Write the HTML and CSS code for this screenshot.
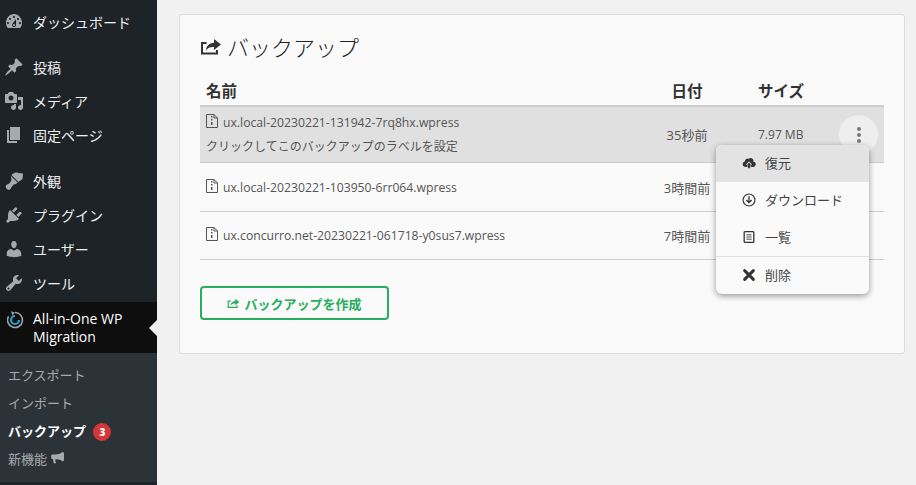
FILE: index.html
```html
<!DOCTYPE html>
<html lang="ja">
<head>
<meta charset="utf-8">
<title>バックアップ</title>
<link rel="stylesheet" href="styles.css">
</head>
<body>
<div class="shell">
  <aside class="sidebar">
    <nav class="menu">
      <a class="item first"><svg class="mi" viewBox="0 0 20 20"><path fill-rule="evenodd" d="M3.76 16h12.48c1.1-1.43 1.76-3.21 1.76-5.14 0-4.66-3.58-8.86-8-8.86s-8 4.2-8 8.86c0 1.93.66 3.71 1.76 5.14zM10 4c.55 0 1 .45 1 1s-.45 1-1 1-1-.45-1-1 .45-1 1-1zM6 6c.55 0 1 .45 1 1s-.45 1-1 1-1-.45-1-1 .45-1 1-1zm8 0c.55 0 1 .45 1 1s-.45 1-1 1-1-.45-1-1 .45-1 1-1zm-5.37 5.55L12 7v6c0 1.1-.9 2-2 2s-2-.9-2-2c0-.57.25-1.07.63-1.45zM4 10c.55 0 1 .45 1 1s-.45 1-1 1-1-.45-1-1 .45-1 1-1zm12 0c.55 0 1 .45 1 1s-.45 1-1 1-1-.45-1-1 .45-1 1-1zm-5 3c0-.55-.45-1-1-1s-1 .45-1 1 .45 1 1 1 1-.45 1-1z"/></svg><span>ダッシュボード</span></a>
      <a class="item gap"><svg class="mi" viewBox="0 0 20 20"><path d="M10.44 3.02l1.82-1.82 6.36 6.35-1.83 1.82c-1.05-.68-2.48-.57-3.41.36l-.75.75c-.92.93-1.04 2.35-.35 3.41l-1.83 1.82-2.41-2.41-2.8 2.79c-.42.42-3.38 2.71-3.8 2.29s1.86-3.39 2.28-3.81l2.79-2.79L4.1 9.36l1.83-1.82c1.05.69 2.48.57 3.4-.36l.75-.75c.93-.92 1.05-2.35.36-3.41z"/></svg><span>投稿</span></a>
      <a class="item"><svg class="mi" viewBox="0 0 20 20"><path fill-rule="evenodd" d="M13 11V4c0-.55-.45-1-1-1h-1.67L9 1H5L3.67 3H2c-.55 0-1 .45-1 1v7c0 .55.45 1 1 1h10c.55 0 1-.45 1-1zM7 4.5c1.38 0 2.5 1.12 2.5 2.5S8.38 9.5 7 9.5 4.5 8.38 4.5 7 5.62 4.5 7 4.5zM14 6h5v10.5c0 1.38-1.12 2.5-2.5 2.5S14 17.88 14 16.5s1.12-2.5 2.5-2.5c.17 0 .34.02.5.05V9h-3V6zm-4 8.05V13h2v3.5c0 1.38-1.12 2.5-2.5 2.5S7 17.88 7 16.5 8.12 14 9.5 14c.17 0 .34.02.5.05z"/></svg><span>メディア</span></a>
      <a class="item"><svg class="mi" viewBox="0 0 20 20"><path d="M6 15V2h10v13H6zm-1 1h8v2H3V5h2v11z"/></svg><span>固定ページ</span></a>
      <a class="item gap wide"><svg class="mi" viewBox="0 0 20 20"><path d="M14.48 11.06L7.41 3.97c.36-.33.7-.64 1.01-.92C10.34 1.33 13.12 1 15 2l4 .5-.5 5.5zM6.7 4.7l7.1 7.1-2 1.1c-1 .5-2 .3-2.5 1L7.5 16c-.3.5-.2 1.2-.6 1.6l-.9.9c-.8.8-2.5 0-3.3-.8s-1.5-2.4-.7-3.2l1-1c.4-.4 1.1-.3 1.6-.6l1.9-1.8c.7-.5.5-1.5 1-2.5L6.7 4.7z"/></svg><span>外観</span></a>
      <a class="item"><svg class="mi" viewBox="0 0 20 20"><path d="M13.11 4.36L9.87 7.6 8 5.73l3.24-3.24c.35-.34 1.05-.2 1.56.32.52.51.66 1.21.31 1.55zm-8 1.77l.91-1.12 9.01 9.01-1.19.84c-.71.71-2.63 1.16-3.82 1.16H6.14L4.9 17.26c-.59.59-1.54.59-2.12 0-.59-.58-.59-1.53 0-2.12l1.24-1.24v-3.88c0-1.13.4-3.13 1.09-3.89zm7.26 3.97l3.24-3.24c.34-.35 1.04-.21 1.55.31.52.51.66 1.21.31 1.55l-3.24 3.25z"/></svg><span>プラグイン</span></a>
      <a class="item"><svg class="mi" viewBox="0 0 20 20"><path d="M10 9.25c-2.27 0-2.73-3.44-2.73-3.44C7 4.02 7.82 2 9.97 2c2.16 0 2.98 2.02 2.71 3.81 0 0-.41 3.44-2.68 3.44zm0 2.57L12.72 10c2.39 0 4.52 2.33 4.52 4.53v2.49s-3.65 1.13-7.24 1.13c-3.65 0-7.24-1.13-7.24-1.13v-2.49c0-2.25 1.94-4.48 4.47-4.48z"/></svg><span>ユーザー</span></a>
      <a class="item"><svg class="mi" viewBox="0 0 20 20"><path fill-rule="evenodd" d="M16.68 9.77c-1.34 1.34-3.3 1.67-4.95.99l-5.41 6.52c-.99.99-2.59.99-3.58 0s-.99-2.59 0-3.57l6.52-5.42c-.68-1.65-.35-3.61.99-4.95 1.28-1.28 3.12-1.62 4.72-1.06l-2.89 2.89 2.82 2.82 2.86-2.87c.53 1.58.18 3.4-1.08 4.65zM3.81 16.21c.4.39 1.04.39 1.43 0 .4-.4.4-1.04 0-1.43-.39-.4-1.03-.4-1.43 0-.39.39-.39 1.03 0 1.43z"/></svg><span>ツール</span></a>
      <a class="item current">
        <svg class="logo" viewBox="0 0 20 20"><path d="M10 2.5a7.5 7.5 0 1 1-6.5 3.8" fill="none" stroke="#a0a5aa" stroke-width="1.6"/><path d="M6 1.2l3.8 1.3-2.3 3z" fill="#a0a5aa"/><path d="M14 10a4 4 0 1 1-4-4" fill="none" stroke="#1fa5d8" stroke-width="2.2"/></svg>
        <span>All-in-One WP Migration</span>
      </a>
    </nav>
    <ul class="submenu">
      <li>エクスポート</li>
      <li>インポート</li>
      <li class="on">バックアップ <b class="count">3</b></li>
      <li>新機能 <svg class="horn" viewBox="0 0 16 14"><path d="M15 1v9l-2 1c-.2-.5-.6-.8-1-1-2-1.3-5-1.6-7-1.6v2.8c.3.8.6 1.3 1 1.8H3L2 8.3H1.5C.5 8.300 0 7.300 0 5.500s.5-2.700 1.500-2.700H5C7.500 2.800 10 2.500 12 1c.5-.3.8-.6 1-1z"/></svg></li>
    </ul>
  </aside>
  <main class="content">
    <section class="card">
      <h1 class="title"><svg class="title-ic" viewBox="0 0 22 18"><path d="M14 1l7 5.500-7 5.500V9c-4 0-6.500.6-8 4 0-5 3-8 8-8.300V1z"/><path d="M17 12v3.500H2V5h4.500" fill="none" stroke="currentColor" stroke-width="2"/></svg>バックアップ</h1>
      <div class="table">
        <div class="row head"><div class="name">名前</div><div class="date">日付</div><div class="size">サイズ</div><div></div></div>
        <div class="row sel">
          <div class="name"><div class="file"><svg class="zip" viewBox="0 0 12 14"><path d="M.5.5h7.500l3.500 3.500v9.500H.5z" fill="none" stroke="currentColor"/><path d="M8 .5v3.500h3.500" fill="none" stroke="currentColor"/><path d="M5 2h1.500v1.500H5zM5 5h1.500v1.500H5zM5 8h1.500v3H5z"/></svg>ux.local-20230221-131942-7rq8hx.wpress</div><div class="label">クリックしてこのバックアップのラベルを設定</div></div>
          <div class="date">35秒前</div>
          <div class="size">7.97 MB</div>
          <div class="act"><span class="dots"><i></i><i></i><i></i></span></div>
        </div>
        <div class="row">
          <div class="name"><div class="file"><svg class="zip" viewBox="0 0 12 14"><path d="M.5.5h7.500l3.500 3.500v9.500H.5z" fill="none" stroke="currentColor"/><path d="M8 .5v3.500h3.500" fill="none" stroke="currentColor"/><path d="M5 2h1.500v1.500H5zM5 5h1.500v1.500H5zM5 8h1.500v3H5z"/></svg>ux.local-20230221-103950-6rr064.wpress</div></div>
          <div class="date">3時間前</div><div class="size"></div><div class="act"></div>
        </div>
        <div class="row last">
          <div class="name"><div class="file"><svg class="zip" viewBox="0 0 12 14"><path d="M.5.5h7.500l3.500 3.500v9.500H.5z" fill="none" stroke="currentColor"/><path d="M8 .5v3.500h3.500" fill="none" stroke="currentColor"/><path d="M5 2h1.500v1.500H5zM5 5h1.500v1.500H5zM5 8h1.500v3H5z"/></svg>ux.concurro.net-20230221-061718-y0sus7.wpress</div></div>
          <div class="date">7時間前</div><div class="size"></div><div class="act"></div>
        </div>
        <div class="popup">
          <div class="pi hover"><svg class="pic" viewBox="0 0 16 14"><path d="M12.900 5.500A3 3 0 0 0 8 2.200 3.500 3.500 0 0 0 3.200 5.200 3.200 3.200 0 0 0 3.500 11.500h2.700V9H4.300L8 5l3.700 4H9.800v2.500h2.700a3 3 0 0 0 .4-6z"/><path d="M6.900 9H5.700L8 6.500 10.300 9H9.100v4H6.900z"/></svg>復元</div>
          <div class="pi"><svg class="pic" viewBox="0 0 16 16"><circle cx="8" cy="8" r="6.800" fill="none" stroke="currentColor" stroke-width="1.300"/><path d="M8 3.800v7M5 8l3 3 3-3" fill="none" stroke="currentColor" stroke-width="1.500"/></svg>ダウンロード</div>
          <div class="pi"><svg class="pic" viewBox="0 0 16 16"><rect x="2.500" y="1.800" width="11" height="12.400" rx="1" fill="none" stroke="currentColor" stroke-width="1.500"/><path d="M5 5.500h6M5 8h6M5 10.500h6" stroke="currentColor" stroke-width="1"/></svg>一覧</div>
          <div class="pi del"><svg class="pic" viewBox="0 0 16 16"><path d="M3 3l10 10M13 3L3 13" stroke="currentColor" stroke-width="3.400" stroke-linecap="round"/></svg>削除</div>
        </div>
      </div>
      <a class="create"><svg class="btn-ic" viewBox="0 0 22 18"><path d="M14 1l7 5.500-7 5.500V9c-4 0-6.500.6-8 4 0-5 3-8 8-8.300V1z"/><path d="M17 12v3.500H2V5h4.500" fill="none" stroke="currentColor" stroke-width="2"/></svg>バックアップを作成</a>
    </section>
  </main>
</div>
</body>
</html>
```

FILE: styles.css
```css
* { box-sizing: border-box; }
html, body { margin: 0; height: 100%; overflow: hidden; }
body { background: #f1f1f1; font-family: "Open Sans", "Noto Sans CJK JP", sans-serif; color: #444; }
.shell { display: flex; height: 485px; }

.sidebar { width: 157px; flex: none; background: #1d2327; }
.menu { display: flex; flex-direction: column; padding-top: 5px; }
.item { display: flex; align-items: center; height: 34px; padding-left: 6px; gap: 8px; color: #f0f0f1; font-size: 14px; }
.item.gap { margin-top: 11px; }
.item.wide { margin-top: 12px; }
.mi { width: 20px; height: 20px; fill: #a7aaad; flex: none; margin-left: -2px; margin-right: 1px; }
.item.current { background: #0e0e0e; color: #fff; height: 51px; position: relative; line-height: 18px; font-weight: 500; align-items: flex-start; padding-top: 8px; margin-top: 2px; }
.item.current::after { content: ""; position: absolute; right: 0; top: 18px; border: 8px solid transparent; border-right-color: #f1f1f1; border-left: 0; }
.logo { width: 20px; height: 20px; flex: none; margin: 0 0 0 -1px; }
.submenu { list-style: none; margin: 0; padding: 8px 0 10px; background: #2c3338; height: 129px; }
.submenu li { height: 28px; line-height: 28px; padding-left: 8px; font-size: 13px; color: #a7aaad; white-space: nowrap; }
.submenu li.on { color: #fff; font-weight: 700; }
.count { display: inline-block; width: 18px; height: 18px; line-height: 18px; margin-left: 4px; border-radius: 50%; background: #d63638; color: #fff; font-size: 10px; text-align: center; vertical-align: 0; }
.horn { width: 14px; height: 12px; fill: #a7aaad; margin-left: 1px; vertical-align: 0; }

.content { flex: 1; padding: 14px 11px 0 22px; }
.card { height: 340px; background: #fafafa; border: 1px solid #dcdcdc; border-radius: 3px; padding: 17px 20px 0; }
.title { display: flex; align-items: center; gap: 5px; margin: 0; height: 30px; font-size: 22px; font-weight: 300; color: #222; line-height: 30px; }
.title-ic { width: 22px; height: 18px; fill: #333; color: #333; flex: none; }

.table { position: relative; margin-top: 18px; }
.row { display: grid; grid-template-columns: 457px 60px 1fr 52px; align-items: center; height: 49px; border-bottom: 1px solid #ccc; font-size: 12px; color: #555; }
.row.last { height: 48px; }
.row.head { height: 27px; font-size: 15.5px; font-weight: 700; color: #333; border-bottom: 2px solid #ccc; align-items: flex-start; line-height: 22px; }
.row.sel { height: 56px; background: #e0e0e0; }
.name { padding-left: 6px; }
.date { font-size: 13px; text-align: center; white-space: nowrap; }
.row.head .date { font-size: 15.5px; }
.size { padding-left: 41px; white-space: nowrap; }
.file { display: flex; align-items: center; gap: 5px; white-space: nowrap; font-size: 12.2px; }
.label { margin-top: 8px; line-height: 16px; }
.zip { width: 12px; height: 14px; fill: #555; color: #555; flex: none; margin-top: -3px; }
.act { display: flex; justify-content: flex-end; padding-right: 6px; }
.dots { display: flex; flex-direction: column; align-items: center; justify-content: center; gap: 2px; width: 39px; height: 39px; border-radius: 50%; background: #eee; }
.dots i { width: 4px; height: 4px; border-radius: 50%; background: #777; }

.popup { position: absolute; left: 516px; top: 65px; width: 153px; height: 149px; background: #fafafa; border-radius: 6px; box-shadow: 0 2px 6px rgba(0,0,0,.4); overflow: hidden; font-size: 13px; color: #444; }
.pi { display: flex; align-items: center; gap: 9px; height: 37px; padding: 0 0 2px 26px; }
.pi.hover { background: #e3e3e3; }
.pi.del { border-top: 1px solid #ddd; height: 38px; }
.pic { width: 14px; height: 14px; color: #333; fill: #333; flex: none; }

.create { display: flex; align-items: center; justify-content: center; gap: 4px; width: 189px; height: 34px; margin-top: 26px; border: 2px solid #27ae60; border-radius: 4px; color: #27ae60; font-size: 13px; font-weight: 700; }
.btn-ic { width: 13px; height: 11px; fill: #27ae60; color: #27ae60; flex: none; }
```
